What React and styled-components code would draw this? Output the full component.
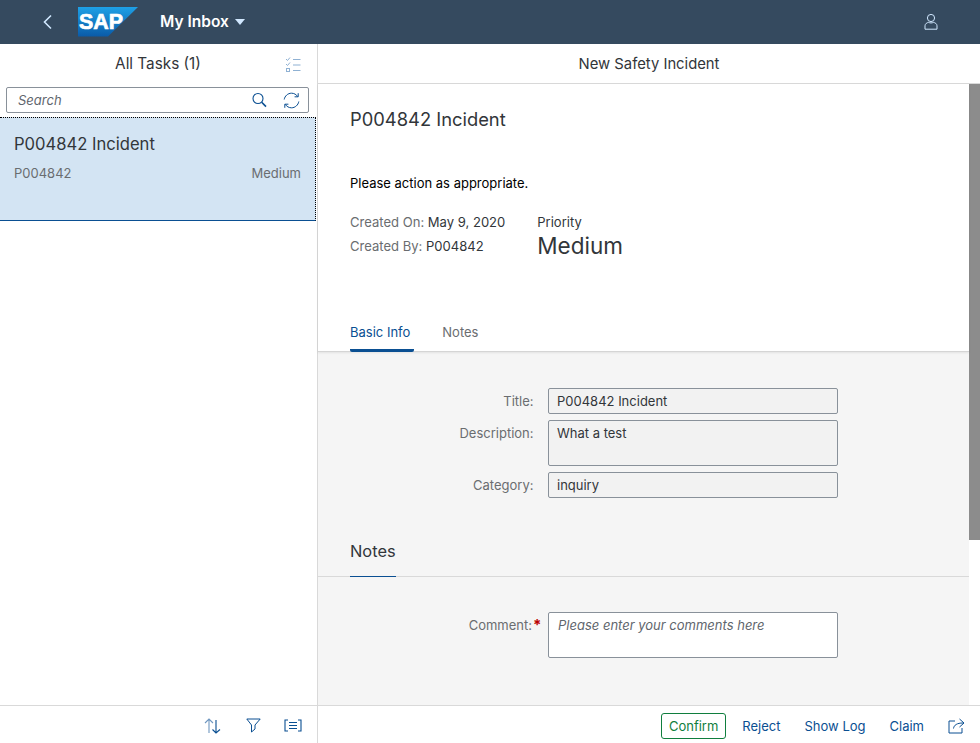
import React from "react";
import styled, { createGlobalStyle } from "styled-components";

const Global = createGlobalStyle`
  html, body {
    margin: 0;
    padding: 0;
    background: #fff;
  }
  * {
    box-sizing: border-box;
  }
`;

const Page = styled.div`
  width: 980px;
  height: 743px;
  overflow: hidden;
  display: flex;
  flex-direction: column;
  font-family: Inter, "Liberation Sans", sans-serif;
  font-size: 14px;
  color: #32363a;
`;

const TopBar = styled.header`
  height: 44px;
  flex: none;
  background: #354a5f;
  display: flex;
  align-items: center;
  padding: 0 42px 0 42px;
`;

const BackIcon = styled.svg`
  width: 12px;
  height: 16px;
  margin-right: 24px;
`;

const AppTitle = styled.div`
  margin-left: 22px;
  margin-top: -1px;
  display: flex;
  align-items: center;
  gap: 6px;
  color: #fff;
  font-size: 15.5px;
  font-weight: 600;
`;

const Caret = styled.span`
  width: 0;
  height: 0;
  border-left: 5px solid transparent;
  border-right: 5px solid transparent;
  border-top: 6px solid #d1e8ff;
  margin-top: 1px;
`;

const UserIcon = styled.svg`
  margin-left: auto;
  margin-top: -2px;
  width: 14px;
  height: 17px;
`;

const Body = styled.div`
  flex: 1;
  min-height: 0;
  display: flex;
`;

const Master = styled.aside`
  width: 318px;
  flex: none;
  border-right: 1px solid #d9d9d9;
  display: flex;
  flex-direction: column;
`;

const MasterHead = styled.div`
  height: 39px;
  flex: none;
  position: relative;
  display: flex;
  align-items: center;
  justify-content: center;
  padding-right: 1px;
  font-size: 15.3px;
`;

const SelectIcon = styled.svg`
  position: absolute;
  right: 16px;
  top: 12px;
  width: 16px;
  height: 17px;
`;

const SearchBox = styled.div`
  height: 26px;
  margin: 4px 8px 4px 6px;
  border: 1px solid #89919a;
  border-radius: 2px;
  display: flex;
  align-items: center;
  padding: 0 8px 0 11px;
  flex: none;
`;

const SearchHint = styled.span`
  flex: 1;
  font-style: italic;
  font-size: 13px;
  color: #5f666d;
`;

const IconGroup = styled.div`
  display: flex;
  align-items: center;
  gap: 16px;
`;

const TaskItem = styled.div`
  height: 104px;
  flex: none;
  margin-right: 1px;
  background: #d3e4f3;
  border-top: 1px dotted #000;
  border-right: 1px dotted #000;
  border-bottom: 1px solid #0a4f92;
  padding: 14px 14px 0 14px;
`;

const TaskTitle = styled.div`
  font-size: 16.6px;
  line-height: 24px;
`;

const TaskMeta = styled.div`
  display: flex;
  justify-content: space-between;
  margin-top: 7px;
  font-size: 13px;
  line-height: 20px;
  color: #6a6d70;
`;

const Detail = styled.main`
  flex: 1;
  min-width: 0;
  display: flex;
  flex-direction: column;
`;

const DetailHead = styled.div`
  height: 40px;
  flex: none;
  border-bottom: 1px solid #d9d9d9;
  display: flex;
  align-items: center;
  justify-content: center;
  font-size: 14.8px;
`;

const Scroller = styled.div`
  flex: 1;
  min-height: 0;
  display: flex;
`;

const DetailContent = styled.div`
  flex: 1;
  min-width: 0;
  display: flex;
  flex-direction: column;
`;

const ScrollTrack = styled.div`
  width: 11px;
  flex: none;
`;

const ScrollThumb = styled.div`
  height: 456px;
  background: #8c8c8c;
`;

const Summary = styled.section`
  height: 268px;
  flex: none;
  padding: 23px 32px 0;
  border-bottom: 1px solid #d5d5d5;
  box-shadow: 0 1px 2px rgba(0, 0, 0, 0.08);
  display: flex;
  flex-direction: column;
  position: relative;
`;

const TaskHeading = styled.h1`
  margin: 0;
  font-size: 18.35px;
  font-weight: 400;
  line-height: 24px;
`;

const Message = styled.p`
  margin: 43px 0 0;
  font-size: 13px;
  line-height: 18px;
  color: #000;
`;

const Facts = styled.div`
  display: flex;
  gap: 32px;
  margin-top: 21px;
`;

const FactList = styled.div`
  display: flex;
  flex-direction: column;
  gap: 6px;
  font-size: 13.05px;
  line-height: 18px;
  color: #32363a;
`;

const FactName = styled.span`
  color: #6a6d70;
`;

const PriorityLabel = styled.div`
  font-size: 13px;
  line-height: 18px;
`;

const PriorityValue = styled.div`
  font-size: 22.5px;
  line-height: 30px;
`;

const Tabs = styled.nav`
  margin-top: auto;
  display: flex;
  gap: 28px;
`;

const Tab = styled.div`
  padding: 0 4px 8px 0;
  margin-bottom: -1px;
  font-size: 13px;
  line-height: 18px;
  color: ${p => (p.$active ? "#0a4f92" : "#6a6d70")};
  border-bottom: 3px solid ${p => (p.$active ? "#0a4f92" : "transparent")};
  border-radius: 0 0 2px 2px;
`;

const Sections = styled.section`
  flex: 1;
  background: #f5f5f5;
  display: flex;
  flex-direction: column;
`;

const Form = styled.div`
  padding-left: 230px;
  padding-top: ${p => p.$top}px;
  display: grid;
  grid-template-columns: 290px;
  row-gap: 6px;
`;

const Field = styled.div`
  position: relative;
  height: ${p => (p.$tall ? "46px" : "26px")};
  width: 290px;
  padding: ${p => (p.$tall ? "3px 8px 0" : "0 8px")};
  padding-left: ${p => (p.$editable ? "9px" : "8px")};
  display: flex;
  align-items: ${p => (p.$tall ? "flex-start" : "center")};
  border: 1px solid #89919a;
  border-radius: 2px;
  background: ${p => (p.$editable ? "#fff" : "#f2f2f2")};
  font-size: 13px;
  line-height: 18px;
  font-style: ${p => (p.$editable ? "italic" : "normal")};
  color: ${p => (p.$editable ? "#5f666d" : "#32363a")};
`;

const FieldLabel = styled.label`
  position: absolute;
  right: 100%;
  top: 3px;
  margin-right: ${p => (p.$required ? "17px" : "15.5px")};
  white-space: nowrap;
  font-size: 13px;
  font-style: normal;
  line-height: 18px;
  color: #6a6d70;
`;

const Required = styled.span`
  position: absolute;
  left: 100%;
  margin-left: 1px;
  color: #bb0000;
  font-size: 15px;
  font-weight: 700;
`;

const SectionHead = styled.div`
  margin-top: 39px;
  padding: 0 32px;
  height: 40px;
  border-bottom: 1px solid #d9d9d9;
  flex: none;
`;

const SectionTitle = styled.div`
  display: inline-block;
  height: 40px;
  border-bottom: 1px solid #0a4f92;
  font-size: 16.4px;
  line-height: 28px;
`;

const Footer = styled.footer`
  height: 38px;
  flex: none;
  display: flex;
  border-top: 1px solid #d9d9d9;
`;

const MasterFooter = styled.div`
  width: 318px;
  flex: none;
  border-right: 1px solid #d9d9d9;
  display: flex;
  align-items: center;
  justify-content: flex-end;
  gap: 23px;
  padding: 2px 15px 0 0;
`;

const SortIcon = styled.svg`
  margin-right: 2px;
`;

const DetailFooter = styled.div`
  flex: 1;
  display: flex;
  align-items: center;
  justify-content: flex-end;
  padding: 2px 15px 0 0;
`;

const ActionButton = styled.button`
  height: 26px;
  padding: 0 ${p => (p.$accept ? "7px" : "0")};
  margin-right: ${p => p.$gap}px;
  background: transparent;
  border: ${p => (p.$accept ? "1px solid #107e3e" : "none")};
  border-radius: 3px;
  color: ${p => (p.$accept ? "#107e3e" : "#0a4f92")};
  font: inherit;
  font-size: 13px;
`;

const ink = "#0a4f92";

const SapLogo = () => (
  <svg width="60" height="30" viewBox="0 0 60 30">
    <defs>
      <linearGradient id="sapBlue" x1="0" y1="0" x2="0" y2="1">
        <stop offset="0" stopColor="#1ea0e6" />
        <stop offset="1" stopColor="#0a5ba8" />
      </linearGradient>
    </defs>
    <polygon points="0,0 60,0 30,29.5 0,29.5" fill="url(#sapBlue)" />
    <text
      x="1"
      y="21.5"
      fill="#fff"
      stroke="#fff"
      strokeWidth="0.7"
      fontFamily="'Liberation Sans', sans-serif"
      fontWeight="700"
      fontSize="22"
      textLength="44"
      lengthAdjust="spacingAndGlyphs"
    >
      SAP
    </text>
  </svg>
);

export default function App() {
  return (
    <Page>
      <Global />
      <TopBar>
        <BackIcon viewBox="0 0 12 16">
          <path d="M9 1.5 2.5 8 9 14.5" fill="none" stroke="#d1e8ff" strokeWidth="1.6" />
        </BackIcon>
        <SapLogo />
        <AppTitle>
          My Inbox
          <Caret />
        </AppTitle>
        <UserIcon viewBox="0 0 14 17" fill="none" stroke="#d1e8ff" strokeWidth="1">
          <circle cx="7" cy="5" r="3.6" />
          <path d="M1 16.2v-3.4C1 10.8 3 9.6 4.6 9.4M13 16.2v-3.4c0-2-2-3.2-3.6-3.4M4.6 9.4c1.4.7 3.4.7 4.8 0M1 16.2h12" />
        </UserIcon>
      </TopBar>

      <Body>
        <Master>
          <MasterHead>
            All Tasks (1)
            <SelectIcon viewBox="0 0 16 17" fill="none" stroke="#8fb1d3" strokeWidth="1">
              <path d="M1 3l1.5 1.5L5 1.5M1 8l1.5 1.5L5 6.5" />
              <rect x="1.5" y="12.5" width="3" height="3" />
              <path d="M8 3.5h7.5M8 9h7.5M8 14.5h7.5" />
            </SelectIcon>
          </MasterHead>
          <SearchBox>
            <SearchHint>Search</SearchHint>
            <IconGroup>
              <svg width="15" height="16" viewBox="0 0 15 16" fill="none" stroke={ink}>
                <circle cx="6" cy="6.5" r="5" strokeWidth="1.1" />
                <path d="M9.7 10.2 14 14.6" strokeWidth="1.6" />
              </svg>
              <svg width="17" height="17" viewBox="0 0 17 17" fill="none" stroke={ink} strokeWidth="1">
                <path d="M1.2 7.5C1.8 4 4.8 1.2 8.5 1.2c2.6 0 4.8 1.3 6.2 3.4" />
                <path d="M15.2 1.2v3.6h-3.6" />
                <path d="M15.8 9.5c-.6 3.5-3.6 6.3-7.3 6.3-2.6 0-4.8-1.3-6.2-3.4" />
                <path d="M1.8 15.8v-3.6h3.6" />
              </svg>
            </IconGroup>
          </SearchBox>
          <TaskItem>
            <TaskTitle>P004842 Incident</TaskTitle>
            <TaskMeta>
              <span>P004842</span>
              <span>Medium</span>
            </TaskMeta>
          </TaskItem>
        </Master>

        <Detail>
          <DetailHead>New Safety Incident</DetailHead>
          <Scroller>
            <DetailContent>
              <Summary>
                <TaskHeading>P004842 Incident</TaskHeading>
                <Message>Please action as appropriate.</Message>
                <Facts>
                  <FactList>
                    <div>
                      <FactName>Created On:</FactName> May 9, 2020
                    </div>
                    <div>
                      <FactName>Created By:</FactName> P004842
                    </div>
                  </FactList>
                  <div>
                    <PriorityLabel>Priority</PriorityLabel>
                    <PriorityValue>Medium</PriorityValue>
                  </div>
                </Facts>
                <Tabs>
                  <Tab $active>Basic Info</Tab>
                  <Tab>Notes</Tab>
                </Tabs>
              </Summary>
              <Sections>
                <Form $top={36}>
                  <Field>
                    <FieldLabel>Title:</FieldLabel>
                    P004842 Incident
                  </Field>
                  <Field $tall>
                    <FieldLabel>Description:</FieldLabel>
                    What a test
                  </Field>
                  <Field>
                    <FieldLabel>Category:</FieldLabel>
                    inquiry
                  </Field>
                </Form>
                <SectionHead>
                  <SectionTitle>Notes</SectionTitle>
                </SectionHead>
                <Form $top={35}>
                  <Field $tall $editable>
                    <FieldLabel $required>
                      Comment:<Required>*</Required>
                    </FieldLabel>
                    Please enter your comments here
                  </Field>
                </Form>
              </Sections>
            </DetailContent>
            <ScrollTrack>
              <ScrollThumb />
            </ScrollTrack>
          </Scroller>
        </Detail>
      </Body>

      <Footer>
        <MasterFooter>
          <SortIcon width="17" height="16" viewBox="0 0 17 16" fill="none" strokeWidth="1.1">
            <path d="M5 15V1.5M1 5l4-4 4 4" stroke="#6f97c0" />
            <path d="M12 2v13M8.5 11.5 12 15l4-3.5" stroke={ink} />
          </SortIcon>
          <svg width="15" height="15" viewBox="0 0 15 15" fill="none" stroke={ink} strokeWidth="1">
            <path d="M.8 1h13.4L9 7v4l-3.5 3V7z" />
          </svg>
          <svg width="18" height="13" viewBox="0 0 18 13" fill="none" stroke={ink} strokeWidth="1.1">
            <path d="M4 1H1v11h3M14 1h3v11h-3" />
            <path d="M5 3.5h8M5 6.5h8M5 9.5h8" />
          </svg>
        </MasterFooter>
        <DetailFooter>
          <ActionButton $accept $gap={16}>Confirm</ActionButton>
          <ActionButton $gap={24}>Reject</ActionButton>
          <ActionButton $gap={24}>Show Log</ActionButton>
          <ActionButton $gap={24}>Claim</ActionButton>
          <svg width="17" height="16" viewBox="0 0 17 16" fill="none" stroke={ink} strokeWidth="1">
            <path d="M7 3H1v12h13v-5" />
            <path d="M5.5 10.5C6 7 9 5 15 5M11.5 1 16 5l-4.5 4" />
          </svg>
        </DetailFooter>
      </Footer>
    </Page>
  );
}
